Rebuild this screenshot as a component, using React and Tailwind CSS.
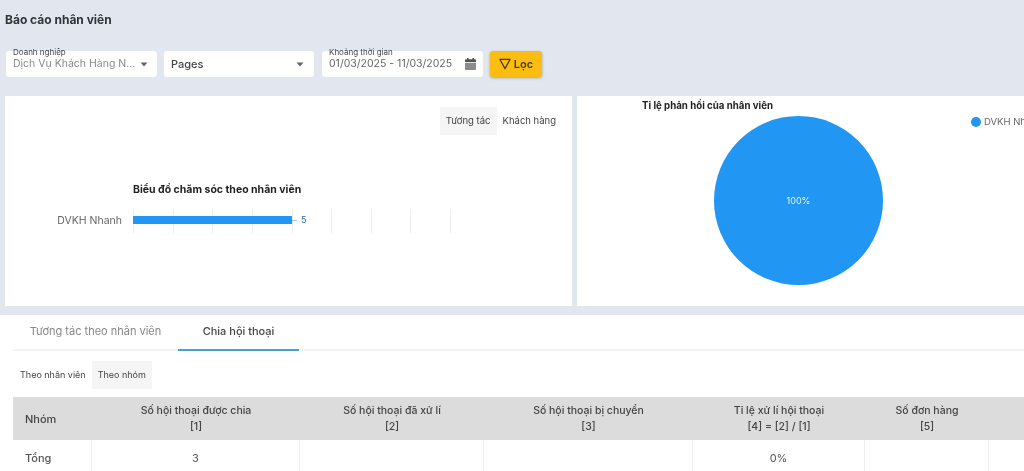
import React from "react";

const columns = [
  { label: "Số hội thoại được chia", note: "[1]", width: "w-[208px]", total: "3" },
  { label: "Số hội thoại đã xử lí", note: "[2]", width: "w-[184px]", total: "" },
  { label: "Số hội thoại bị chuyển", note: "[3]", width: "w-[209px]", total: "" },
  { label: "Tỉ lệ xử lí hội thoại", note: "[4] = [2] / [1]", width: "w-[172px]", total: "0%" },
  { label: "Số đơn hàng", note: "[5]", width: "w-[124px]", total: "" },
];

function Caret() {
  return (
    <svg width="8" height="5" viewBox="0 0 8 5" className="shrink-0">
      <path d="M0.5 0.5h7L4 4.5z" fill="#666" />
    </svg>
  );
}

function FilterIcon() {
  return (
    <svg width="12" height="12" viewBox="0 0 13 13" fill="none" stroke="#4a3b08" strokeWidth="1.3" strokeLinejoin="round">
      <path d="M1 1.5h11L6.5 11.5z" />
    </svg>
  );
}

function CalendarIcon() {
  return (
    <svg width="11" height="12" viewBox="0 0 11 12" fill="#555">
      <rect x="2" y="0" width="1.6" height="2.5" />
      <rect x="7.4" y="0" width="1.6" height="2.5" />
      <path d="M0 2.2a1 1 0 0 1 1-1h9a1 1 0 0 1 1 1V4H0z" />
      <path d="M0 4.8h11V11a1 1 0 0 1-1 1H1a1 1 0 0 1-1-1z" fill="#8a8a8a" />
    </svg>
  );
}

function FloatingLabel({ children }) {
  return <span className="absolute left-[7px] top-[-4px] whitespace-nowrap text-[8px] leading-[10px] text-[#444]">{children}</span>;
}

function Filters() {
  return (
    <div className="mt-[24px] flex h-[26px] items-stretch pl-[6px]">
      <div className="relative flex w-[151px] items-center justify-between rounded-[3px] bg-white pl-[7px] pr-[9px]">
        <FloatingLabel>Doanh nghiệp</FloatingLabel>
        <span className="whitespace-nowrap text-[10.5px] text-[#8a8a8a]">Dịch Vụ Khách Hàng N...</span>
        <Caret />
      </div>
      <div className="ml-[7px] flex w-[150px] items-center justify-between rounded-[3px] bg-white pl-[7px] pr-[10px]">
        <span className="text-[11px] font-medium text-[#444]">Pages</span>
        <Caret />
      </div>
      <div className="relative ml-[8px] flex w-[161px] items-center justify-between rounded-[3px] bg-white pl-[7px] pr-[7px]">
        <FloatingLabel>Khoảng thời gian</FloatingLabel>
        <span className="whitespace-nowrap text-[10.5px] text-[#666]">01/03/2025 - 11/03/2025</span>
        <CalendarIcon />
      </div>
      <button className="ml-[7px] flex w-[52px] items-center justify-center gap-[3px] rounded-[3px] bg-[#fcbd13] text-[11px] font-semibold text-[#4a3b08] shadow-[0_1px_3px_rgba(0,0,0,0.3)]">
        <FilterIcon />
        Lọc
      </button>
    </div>
  );
}

function BarChart() {
  return (
    <div className="flex w-[567px] flex-col bg-white">
      <div className="flex justify-end pr-[10px] pt-[11px]">
        <div className="flex h-[28px] items-center bg-[#f5f5f5] px-[6px] text-[9.5px] text-[#444]">Tương tác</div>
        <div className="flex h-[28px] items-center bg-white px-[6px] text-[9.5px] text-[#444]">Khách hàng</div>
      </div>
      <h3 className="mt-[48px] pl-[128px] text-[10.5px] font-bold leading-[14px] text-[#222]">Biểu đồ chăm sóc theo nhân viên</h3>
      <div className="mt-[12px] flex h-[24px] items-center">
        <span className="w-[117px] whitespace-nowrap text-right text-[10.5px] text-[#666]">DVKH Nhanh</span>
        <div className="relative ml-[11px] h-[24px] w-[318px]">
          {/* grid lines */}
          <div className="flex h-full justify-between">
            {[0, 1, 2, 3, 4, 5, 6, 7, 8].map((i) => (
              <span key={i} className="h-full w-px bg-[#ececec]" />
            ))}
          </div>
          <div className="absolute left-0 top-[7px] h-[8px] w-[159px] bg-[#2196f3]" />
          <span className="absolute left-[159px] top-[11px] h-px w-[5px] bg-[#9cc8ee]" />
          <span className="absolute left-[168px] top-[4px] text-[9px] leading-[14px] text-[#2b6cb0]">5</span>
        </div>
      </div>
    </div>
  );
}

function PieChart() {
  return (
    <div className="ml-[5px] flex w-[460px] shrink-0 bg-white">
      <div className="w-[65px] shrink-0" />
      <div className="w-[227px] shrink-0 pt-[4px]">
        <h3 className="text-[9.7px] font-bold leading-[12px] text-[#222]">Tỉ lệ phản hồi của nhân viên</h3>
        <div className="ml-[72px] mt-[4px] flex h-[169px] w-[169px] items-center justify-center rounded-full bg-[#2196f3]">
          <span className="text-[9px] text-[#e3f2fd]">100%</span>
        </div>
      </div>
      <div className="ml-[102px] flex h-fit items-center gap-[3px] whitespace-nowrap pt-[19px]">
        <span className="h-[10px] w-[10px] rounded-full bg-[#2196f3]" />
        <span className="text-[9.5px] text-[#666]">DVKH Nhanh</span>
      </div>
    </div>
  );
}

function ReportTable() {
  return (
    <div className="mt-[9px] w-[1040px] bg-white pl-[13px]">
      <div className="flex h-[36px] border-b-2 border-[#f3f3f3]">
        <div className="flex w-[165px] items-center justify-center pb-[1px] text-[11px] text-[#888]">Tương tác theo nhân viên</div>
        <div className="relative flex w-[121px] items-center justify-center pb-[1px] text-[11px] font-medium text-[#444]">
          Chia hội thoại
          <span className="absolute bottom-[-2px] left-0 h-[2px] w-full bg-[#4a9fd4]" />
        </div>
      </div>
      <div className="mt-[10px] flex h-[28px] text-[9px] text-[#444]">
        <div className="flex items-center pl-[7px] pr-[6px]">Theo nhân viên</div>
        <div className="flex items-center bg-[#f5f5f5] px-[6px]">Theo nhóm</div>
      </div>
      <div className="mt-[8px] flex h-[43px] bg-[#dcdcdc] text-[10.5px] font-medium leading-[16px] text-[#444]">
        <div className="flex w-[79px] items-center pl-[12px] text-[11px]">Nhóm</div>
        {columns.map((col) => (
          <div key={col.label} className={`${col.width} flex flex-col items-center justify-center text-center`}>
            <span>{col.label}</span>
            <span>{col.note}</span>
          </div>
        ))}
      </div>
      <div className="flex h-[36px] text-[11px] text-[#555]">
        <div className="flex w-[79px] items-center border-r border-[#f0f0f0] pl-[12px] font-medium">Tổng</div>
        {columns.map((col) => (
          <div key={col.label} className={`${col.width} flex items-center justify-center border-r border-[#f0f0f0]`}>
            {col.total}
          </div>
        ))}
      </div>
    </div>
  );
}

export default function App() {
  return (
    <div className="h-[471px] w-[1024px] overflow-hidden bg-[#e2e6ee] font-['Inter',sans-serif] blur-[0.4px]">
      <h1 className="pl-[5px] pt-[13px] text-[12px] font-bold leading-[14px] text-[#333]">Báo cáo nhân viên</h1>
      <Filters />
      <div className="ml-[5px] mt-[19px] flex h-[210px] w-[1040px]">
        <BarChart />
        <PieChart />
      </div>
      <ReportTable />
    </div>
  );
}
